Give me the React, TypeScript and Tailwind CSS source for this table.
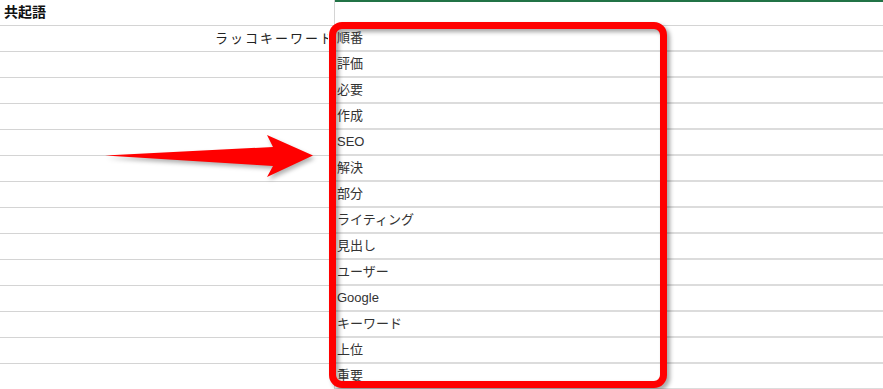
import React from "react";

const words = [
  "順番",
  "評価",
  "必要",
  "作成",
  "SEO",
  "解決",
  "部分",
  "ライティング",
  "見出し",
  "ユーザー",
  "Google",
  "キーワード",
  "上位",
  "重要",
];

const font = { fontFamily: '"Liberation Sans", "Noto Sans CJK JP", sans-serif' };

export default function App() {
  return (
    <div className="relative h-[389px] w-[883px] overflow-hidden bg-white text-[13px] text-[#333]" style={font}>
      {/* header row */}
      <div className="flex h-[26px]">
        <div className="flex w-[335px] items-center border-r border-b border-[#d4d4d4] pl-1 text-[14px] font-bold text-[#111]">
          共起語
        </div>
        <div className="flex-1 border-t-2 border-b border-t-[#217346] border-b-[#d4d4d4]" />
      </div>

      {/* keyword row */}
      <div className="flex h-[26px]">
        <div className="flex w-[335px] items-center border-b border-r border-[#d4d4d4]">
          <div className="w-[328px] overflow-hidden whitespace-nowrap pl-[215px] tracking-[2px] text-[#222]">
            ラッコキーワード
          </div>
        </div>
        <div className="flex flex-1 items-center border-b-2 border-[#dcdcdc] pl-[2px]">{words[0]}</div>
      </div>

      {words.slice(1).map((w) => (
        <div key={w} className="flex h-[26px]">
          <div className="w-[335px] border-b border-r border-[#d4d4d4]" />
          <div className="flex flex-1 items-center border-b-2 border-[#dcdcdc] pl-[2px]">{w}</div>
        </div>
      ))}

      {/* highlight frame */}
      <div className="absolute left-[329px] top-[22px] h-[366px] w-[338px] rounded-[13px] border-[7px] border-[#ff0000] drop-shadow-[3px_3px_2px_rgba(0,0,0,0.35)]" />

      {/* pointer arrow */}
      <svg
        className="absolute left-0 top-0 drop-shadow-[2px_3px_2px_rgba(0,0,0,0.3)]"
        width="883"
        height="389"
        viewBox="0 0 883 389"
      >
        <path d="M105 155.5 L273 147 L267 135 L313 155.5 L267 177 L273 166 Z" fill="#ff0000" />
      </svg>
    </div>
  );
}
